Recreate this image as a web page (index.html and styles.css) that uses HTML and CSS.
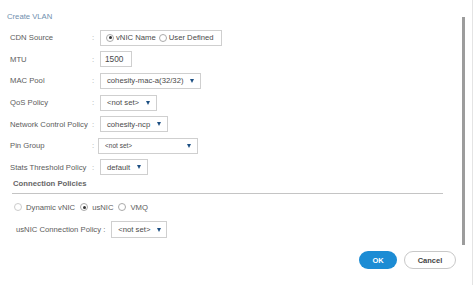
FILE: index.html
```html
<!DOCTYPE html>
<html lang="en">
<head>
    <meta charset="UTF-8">
    <title>Create VLAN</title>
    <link rel="stylesheet" href="styles.css">
</head>
<body>
    <div class="dialog">
        <div class="title">Create VLAN</div>

        <div class="form">
            <div class="row">
                <span class="label">CDN Source</span><span class="colon">:</span>
                <div class="box radios">
                    <span class="radio checked"></span>vNIC Name
                    <span class="radio spaced"></span>User Defined
                </div>
            </div>
            <div class="row">
                <span class="label">MTU</span><span class="colon">:</span>
                <div class="box input">1500</div>
            </div>
            <div class="row">
                <span class="label">MAC Pool</span><span class="colon">:</span>
                <div class="box select">cohesity-mac-a(32/32)<span class="caret"></span></div>
            </div>
            <div class="row">
                <span class="label">QoS Policy</span><span class="colon">:</span>
                <div class="box select">&lt;not set&gt;<span class="caret"></span></div>
            </div>
            <div class="row">
                <span class="label">Network Control Policy</span><span class="colon">:</span>
                <div class="box select">cohesity-ncp<span class="caret"></span></div>
            </div>
            <div class="row">
                <span class="label">Pin Group</span><span class="colon">:</span>
                <div class="box select wide small">&lt;not set&gt;<span class="caret"></span></div>
            </div>
            <div class="row">
                <span class="label">Stats Threshold Policy</span><span class="colon">:</span>
                <div class="box select">default<span class="caret"></span></div>
            </div>
        </div>

        <div class="section-title">Connection Policies</div>

        <div class="policy-radios">
            <span class="radio disabled"></span>Dynamic vNIC
            <span class="radio checked"></span>usNIC
            <span class="radio"></span>VMQ
        </div>

        <div class="usnic-row">
            <span>usNIC Connection Policy :</span>
            <div class="box select">&lt;not set&gt;<span class="caret"></span></div>
        </div>

        <div class="actions">
            <button class="btn btn-ok">OK</button>
            <button class="btn btn-cancel">Cancel</button>
        </div>

        <div class="scrollbar"></div>
    </div>
</body>
</html>
```

FILE: styles.css
```css
body {
    margin: 0;
    background: #fff;
    font-family: "Liberation Sans", Arial, sans-serif;
    font-size: 7.7px;
    color: #5c5c5c;
}
.dialog {
    position: relative;
    width: 472px;
    height: 285px;
    border-right: 1px solid #e4e4e4;
    overflow: hidden;
}
.title {
    padding: 12px 0 0 7px;
    height: 9px;
    line-height: 9px;
    color: #6f8fae;
}
.form { margin-top: 6px; }
.row {
    display: flex;
    align-items: center;
    height: 21.6px;
    padding-left: 10px;
}
.label { width: 82px; white-space: nowrap; }
.colon { width: 8px; color: #aaa; }
.box {
    display: flex;
    align-items: center;
    box-sizing: border-box;
    height: 16px;
    border: 1px solid #cfcfcf;
    background: #fff;
    color: #4a4a4a;
    padding: 0 6px;
    white-space: nowrap;
}
.input { width: 32px; padding: 0 4px; font-size: 8.3px; }
.radios { width: 122px; padding: 0 4px; }
.radio.spaced { margin-left: 3px; }
.select .caret {
    width: 0;
    height: 0;
    margin-left: 7px;
    border-left: 2.5px solid transparent;
    border-right: 2.5px solid transparent;
    border-top: 4px solid #1d4f82;
}
.select.wide { width: 100px; margin-left: -2px; justify-content: space-between; }
.small { font-size: 6.5px; }
.radio {
    display: inline-block;
    box-sizing: border-box;
    width: 8px;
    height: 8px;
    border: 1px solid #aaa;
    border-radius: 50%;
    margin: 0 2px 0 1px;
    position: relative;
}
.radio.checked::after {
    content: "";
    position: absolute;
    left: 1.5px;
    top: 1.5px;
    width: 3px;
    height: 3px;
    border-radius: 50%;
    background: #333;
}
.radio.disabled { border-color: #ccc; }
.section-title {
    margin: 1px 0 0 12px;
    padding-bottom: 5px;
    width: 431px;
    border-bottom: 1px solid #c4c4c4;
    font-weight: bold;
    color: #666;
    text-indent: 1px;
}
.policy-radios {
    display: flex;
    align-items: center;
    margin: 8px 0 0 11px;
    height: 10px;
    gap: 2px;
}
.policy-radios .radio { margin: 0 2px 0 3px; }
.usnic-row {
    display: flex;
    align-items: center;
    gap: 6px;
    margin: 9px 0 0 16px;
    height: 17px;
}
.usnic-row .box { height: 17px; width: 56px; justify-content: space-between; }
.actions {
    display: flex;
    justify-content: flex-end;
    gap: 7px;
    margin: 13px 16px 0 0;
}
.btn {
    font-family: inherit;
    font-size: 7.5px;
    font-weight: bold;
    height: 18px;
    border-radius: 9px;
    cursor: pointer;
}
.btn-ok {
    width: 38px;
    border: none;
    background: #1c8cd4;
    color: #fff;
}
.btn-cancel {
    width: 52px;
    border: 1px solid #c8c8c8;
    background: #fff;
    color: #444;
}
.scrollbar {
    position: absolute;
    left: 462px;
    top: 17px;
    width: 3px;
    height: 228px;
    background: #9c9c9c;
}
```
